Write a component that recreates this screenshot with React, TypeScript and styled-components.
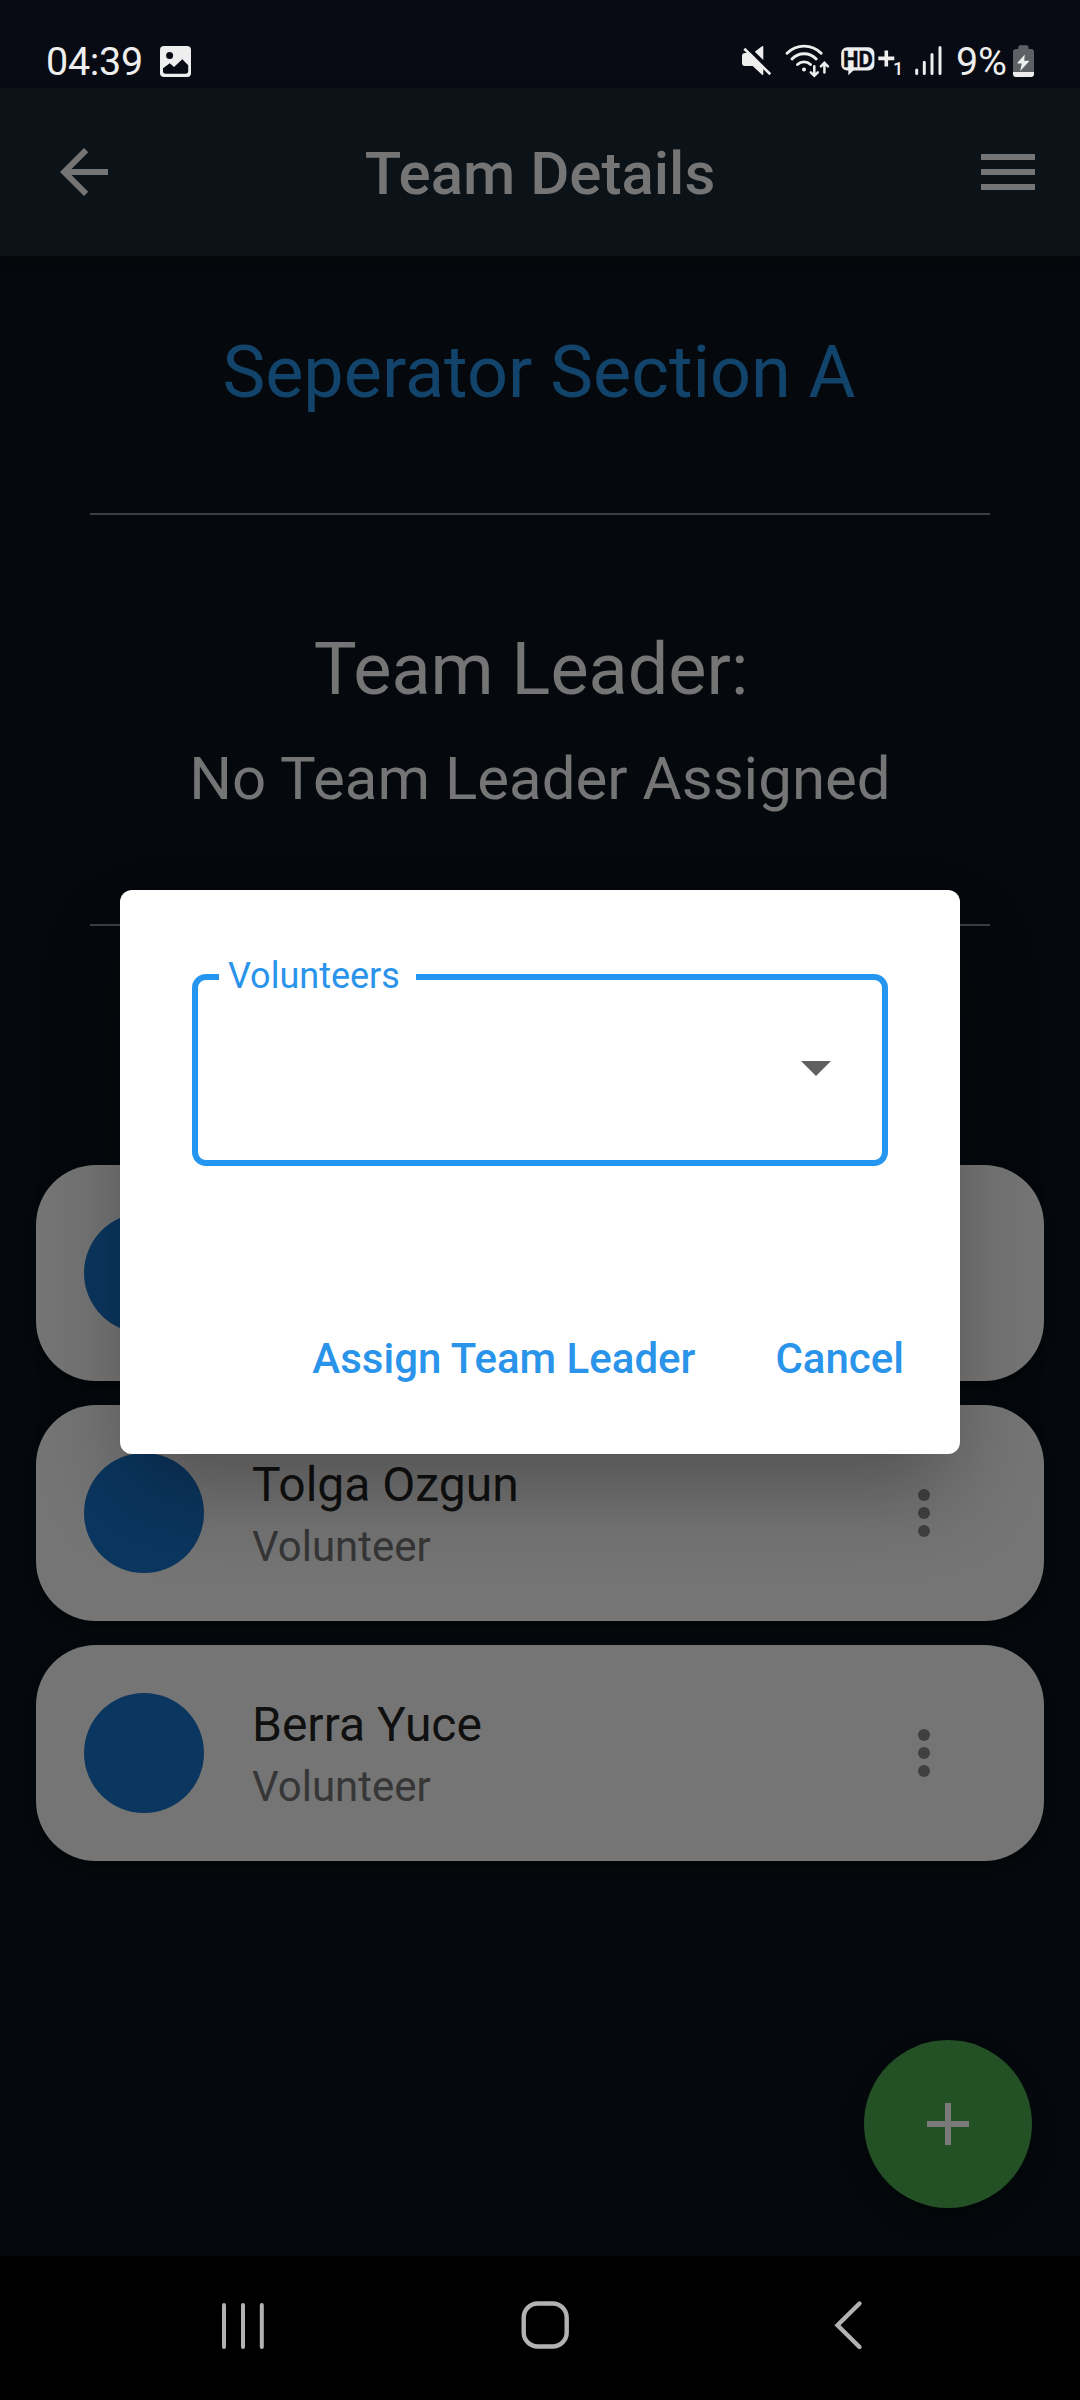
import React from 'react';
import styled, { createGlobalStyle } from 'styled-components';

const GlobalStyle = createGlobalStyle`
  *, *::before, *::after { box-sizing: border-box; }
  body { margin: 0; background: #05090d; font-family: Roboto, "Noto Sans", sans-serif; }
  h1, h2, p { margin: 0; font-weight: 400; }
  button { font: inherit; border: 0; padding: 0; background: none; }
  svg { display: block; flex: none; }
`;

const Screen = styled.div`
  position: relative;
  display: flex;
  flex-direction: column;
  width: 1080px;
  height: 2400px;
  background: #05090d;
  overflow: hidden;
`;

const StatusBar = styled.header`
  display: flex;
  justify-content: space-between;
  height: 88px;
  padding: 40px 44px 0 46px;
  background: #080b13;
  color: #eeeeee;
`;

const StatusGroup = styled.div`
  display: flex;
  height: 40px;
`;

const StatusText = styled.span<{ $width: number }>`
  width: ${(p) => p.$width}px;
  font-size: 39.5px;
  line-height: 43px;
  letter-spacing: -0.3px;
  white-space: nowrap;
`;

const AppBar = styled.nav`
  display: flex;
  align-items: center;
  justify-content: space-between;
  height: 168px;
  padding: 0 36px 0 48px;
  background: #0b1218;
  color: #757575;
  box-shadow: 0 6px 12px rgba(0, 0, 0, 0.3);
`;

const BarTitle = styled.h1`
  flex: 1;
  margin-left: -12px;
  padding-top: 3px;
  text-align: center;
  font-size: 60px;
  font-weight: 500;
  line-height: 70px;
`;

const IconButton = styled.button`
  width: 72px;
  height: 72px;
  color: inherit;
`;

const Content = styled.main`
  display: flex;
  flex-direction: column;
  align-items: center;
  flex: 1;
  padding-top: 75px;
  color: #757575;
`;

const TeamName = styled.h2`
  padding-right: 2px;
  font-size: 72px;
  line-height: 84px;
  color: #12446b;
`;

const Divider = styled.hr`
  width: 900px;
  height: 2px;
  margin: 98px 0 0;
  border: 0;
  background: #3b3f41;
`;

const LeaderSection = styled.section`
  display: flex;
  flex-direction: column;
  align-items: center;
  padding-top: 113px;
  margin-bottom: 12px;
`;

const LeaderHeading = styled.h2`
  font-size: 72px;
  line-height: 84px;
  white-space: pre;
`;

const LeaderName = styled.p`
  margin-top: 32px;
  font-size: 60px;
  line-height: 70px;
`;

const MemberList = styled.div`
  display: flex;
  flex-direction: column;
  gap: 24px;
  width: 1008px;
  margin-top: 239px;
`;

const MemberCard = styled.article`
  display: flex;
  align-items: center;
  height: 216px;
  padding: 0 84px 0 48px;
  border-radius: 60px;
  background: #757575;
  box-shadow: 0 6px 12px rgba(0, 0, 0, 0.4);
`;

const Avatar = styled.div`
  width: 120px;
  height: 120px;
  margin-right: 48px;
  border-radius: 50%;
  background: #0b365f;
`;

const MemberInfo = styled.div`
  flex: 1;
  padding-top: 2px;
`;

const MemberName = styled.p`
  font-size: 48px;
  line-height: 56px;
  color: #101010;
`;

const MemberRole = styled.p`
  margin-top: 9px;
  font-size: 42px;
  line-height: 50px;
  color: #363636;
`;

const MenuButton = styled(IconButton)`
  color: #404040;
`;

const Fab = styled.button`
  position: absolute;
  right: 48px;
  bottom: 192px;
  display: flex;
  align-items: center;
  justify-content: center;
  width: 168px;
  height: 168px;
  border-radius: 50%;
  background: #245026;
  color: #7a7a7a;
  box-shadow: 0 12px 24px rgba(0, 0, 0, 0.35);
`;

const NavBar = styled.footer`
  display: flex;
  align-items: center;
  justify-content: space-between;
  height: 144px;
  padding: 0 207px;
  padding-bottom: 6px;
  background: #000;
  color: #b2b2b2;
`;

const Dialog = styled.div`
  position: absolute;
  top: 890px;
  left: 120px;
  display: flex;
  flex-direction: column;
  justify-content: space-between;
  width: 840px;
  height: 564px;
  padding: 84px 56px 70px 72px;
  border-radius: 12px;
  background: #fff;
  box-shadow: 0 44px 90px -10px rgba(0, 0, 0, 0.31);
`;

const SelectField = styled.div`
  position: relative;
  display: flex;
  align-items: center;
  justify-content: flex-end;
  width: 696px;
  height: 192px;
  padding: 0 51px 4px 0;
  border: 6px solid #2596f0;
  border-radius: 14px;
`;

const FieldLabel = styled.label`
  position: absolute;
  top: -25px;
  left: 21px;
  width: 197px;
  padding-left: 9px;
  background: #fff;
  font-size: 36px;
  line-height: 42px;
  color: #2a93ea;
`;

const Actions = styled.div`
  display: flex;
  justify-content: flex-end;
  gap: 80px;
`;

const TextButton = styled.button`
  font-size: 42px;
  font-weight: 500;
  line-height: 50px;
  color: #2a93ea;
`;

const PictureIcon = () => (
  <svg width="31" height="40" viewBox="0 0 31 40">
    <rect y="6" width="31" height="31" rx="4" fill="currentColor" />
    <circle cx="9.6" cy="15.5" r="3.5" fill="#080b13" />
    <path d="M3 28.2 L9.8 23.3 L14 27 L22.3 19.3 L28.2 25.2 V31 Q28.2 33.7 25.5 33.7 H5.7 Q3 33.7 3 31Z" fill="#080b13" />
  </svg>
);

const MuteIcon = () => (
  <svg width="44" height="40" viewBox="0 0 44 40" fill="currentColor">
    <path d="M5 13 H10.5 L23.3 26 V34 Q23.3 35.6 22 34.7 L12.7 25.9 H5 Q2 25.9 2 22.9 V16.3 Q2 13 5 13Z" />
    <path d="M14.8 11.7 L22 6.2 Q23.3 5.6 23.3 7 V20 Z" />
    <path d="M4.3 8.7 L30.3 34.3" stroke="currentColor" strokeWidth="2.6" />
  </svg>
);

const WifiIcon = () => (
  <svg width="55" height="40" viewBox="0 0 55 40" fill="none" stroke="currentColor" strokeWidth="2.9" strokeLinecap="round">
    <path d="M3 13.3 A24 24 0 0 1 37.2 13.3" />
    <path d="M8 19 A16.5 16.5 0 0 1 32.2 19" />
    <path d="M13.5 24.5 A9.4 9.4 0 0 1 26.5 24.5" />
    <circle cx="20" cy="29.6" r="2" fill="currentColor" stroke="none" />
    <g strokeWidth="2.5">
      <path d="M30.3 26.2 V35.5 M26.8 32.4 L30.3 35.8 L33.8 32.4" />
      <path d="M40.4 32.6 V23 M36.9 26.3 L40.4 22.8 L43.9 26.3" />
    </g>
  </svg>
);

const HdText = styled.text`
  font: 700 22.5px Roboto, sans-serif;
`;

const SimText = styled.text`
  font: 500 18px Roboto, sans-serif;
`;

const HdIcon = () => (
  <svg width="74" height="40" viewBox="0 0 74 40" fill="currentColor">
    <rect x="2.2" y="7.3" width="33.2" height="23.2" rx="6" />
    <path d="M9.3 29 V35.2 L16 29Z" />
    <HdText x="4" y="27" textLength="29.8" lengthAdjust="spacingAndGlyphs" fill="#080b13" stroke="#080b13" strokeWidth="0.5">HD</HdText>
    <path d="M39.3 18.4 H55.3 M47.3 10.4 V26.6" stroke="currentColor" strokeWidth="3.6" />
    <SimText x="54" y="35">1</SimText>
  </svg>
);

const SignalIcon = () => (
  <svg width="43" height="40" viewBox="0 0 43 40" stroke="currentColor" strokeWidth="3" strokeLinecap="round">
    <path d="M3.7 30 V33.4 M11.3 22.3 V33.4 M19 14.5 V33.4 M27 7.6 V33.4" />
  </svg>
);

const BatteryIcon = () => (
  <svg width="25" height="40" viewBox="0 0 25 40">
    <path d="M7.3 9 V7 Q7.3 5.3 9 5.3 H15.8 Q17.5 5.3 17.5 7 V9 H20 Q23 9 23 12 V32 H2 V12 Q2 9 5 9Z" fill="#5d6064" />
    <path d="M2 32 H23 V34 Q23 37 20 37 H5 Q2 37 2 34Z" fill="#eeeeee" />
    <path d="M13.8 14.6 L6.6 22.6 Q6.2 23.4 7 23.4 H10.8 L9.2 31 L18 21.6 Q18.3 20.8 17.5 20.8 H13.2Z" fill="#eeeeee" />
  </svg>
);

const BackArrowIcon = () => (
  <svg width="72" height="72" viewBox="0 0 24 24" fill="currentColor">
    <path d="M20 11H7.83l5.59-5.59L12 4l-8 8 8 8 1.41-1.41L7.83 13H20v-2z" />
  </svg>
);

const MenuIcon = () => (
  <svg width="72" height="72" viewBox="0 0 24 24" fill="currentColor">
    <path d="M3 18h18v-2H3v2zm0-5h18v-2H3v2zm0-7v2h18V6H3z" />
  </svg>
);

const MoreIcon = () => (
  <svg width="72" height="72" viewBox="0 0 24 24" fill="currentColor">
    <circle cx="12" cy="6" r="2" />
    <circle cx="12" cy="12" r="2" />
    <circle cx="12" cy="18" r="2" />
  </svg>
);

const AddIcon = () => (
  <svg width="72" height="72" viewBox="0 0 24 24" fill="currentColor">
    <path d="M19 13h-6v6h-2v-6H5v-2h6V5h2v6h6v2z" />
  </svg>
);

const RecentsIcon = () => (
  <svg width="72" height="72" viewBox="0 0 72 72" stroke="currentColor" strokeWidth="4" strokeLinecap="round">
    <path d="M17 16 V58 M36 16 V58 M54.8 16 V58" />
  </svg>
);

const HomeIcon = () => (
  <svg width="72" height="72" viewBox="0 0 72 72" fill="none" stroke="currentColor" strokeWidth="4.4">
    <rect x="19.7" y="14.5" width="43" height="43" rx="14" />
  </svg>
);

const NavBackIcon = () => (
  <svg width="72" height="72" viewBox="0 0 72 72" fill="none" stroke="currentColor" strokeWidth="4.4" strokeLinecap="round">
    <path d="M58.5 14.5 L36.5 36.2 L58.5 58" />
  </svg>
);

const DropdownIcon = () => (
  <svg width="30" height="15" viewBox="0 0 30 15">
    <path d="M0 0 H30 L15 15Z" fill="#616161" />
  </svg>
);

type Member = { name: string; role: string };

const members: (Member | null)[] = [
  null,
  { name: 'Tolga Ozgun', role: 'Volunteer' },
  { name: 'Berra Yuce', role: 'Volunteer' },
];

export default function App() {
  return (
    <>
      <GlobalStyle />
      <Screen>
        <StatusBar>
          <StatusGroup>
            <StatusText $width={114}>04:39</StatusText>
            <PictureIcon />
          </StatusGroup>
          <StatusGroup>
            <MuteIcon />
            <WifiIcon />
            <HdIcon />
            <SignalIcon />
            <StatusText $width={55}>9%</StatusText>
            <BatteryIcon />
          </StatusGroup>
        </StatusBar>
        <AppBar>
          <IconButton aria-label="Back"><BackArrowIcon /></IconButton>
          <BarTitle>Team Details</BarTitle>
          <IconButton aria-label="Menu"><MenuIcon /></IconButton>
        </AppBar>
        <Content>
          <TeamName>Seperator Section A</TeamName>
          <Divider />
          <LeaderSection>
            <LeaderHeading>{'Team Leader: '}</LeaderHeading>
            <LeaderName>No Team Leader Assigned</LeaderName>
          </LeaderSection>
          <Divider />
          <MemberList>
            {members.map((member, i) => (
              <MemberCard key={i}>
                <Avatar />
                {member && (
                  <>
                    <MemberInfo>
                      <MemberName>{member.name}</MemberName>
                      <MemberRole>{member.role}</MemberRole>
                    </MemberInfo>
                    <MenuButton aria-label="Options"><MoreIcon /></MenuButton>
                  </>
                )}
              </MemberCard>
            ))}
          </MemberList>
        </Content>
        <NavBar>
          <RecentsIcon />
          <HomeIcon />
          <NavBackIcon />
        </NavBar>
        <Fab aria-label="Add"><AddIcon /></Fab>
        <Dialog role="dialog">
          <SelectField>
            <FieldLabel>Volunteers</FieldLabel>
            <DropdownIcon />
          </SelectField>
          <Actions>
            <TextButton>Assign Team Leader</TextButton>
            <TextButton>Cancel</TextButton>
          </Actions>
        </Dialog>
      </Screen>
    </>
  );
}
